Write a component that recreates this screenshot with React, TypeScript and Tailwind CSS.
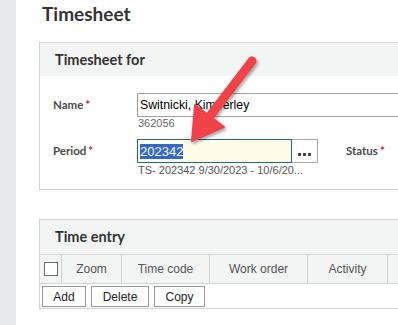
import React from "react";

const lato = { fontFamily: 'Lato, "Open Sans", sans-serif' };
const arial = { fontFamily: '"Liberation Sans", Arial, sans-serif' };

function Req() {
  return <span className="text-[#c0262d] ml-[2px]">*</span>;
}

export default function App() {
  return (
    <div className="relative w-[398px] h-[325px] overflow-hidden bg-white flex">
      <div className="w-[16px] h-full bg-[#e8e9eb] shrink-0" />
      <div className="flex-1 pl-[23px]">
        <div
          className="mt-[2px] ml-[3px] leading-[23px] text-[19px] font-bold text-[#333]"
          style={lato}
        >
          Timesheet
        </div>

        {/* Section 1 */}
        <div className="mt-[17px] w-[400px] border border-r-0 border-[#d3d3d3]">
          <div
            className="h-[33px] bg-[#f3f4f4] flex items-center pl-[15px] text-[14.5px] font-bold text-[#333]"
            style={lato}
          >
            Timesheet for
          </div>
          <div className="pt-[17px] pb-[12px]">
            {/* Name row */}
            <div className="flex">
              <div
                className="w-[97px] pl-[13px] h-[24px] flex items-center text-[11.5px] font-bold text-[#4a4a4a]"
                style={lato}
              >
                Name
                <Req />
              </div>
              <div className="flex-1">
                <div
                  className="h-[24px] border border-r-0 border-[#a0a0a0] flex items-center pl-[2px] text-[12.3px] text-black"
                  style={arial}
                >
                  Switnicki, Kimberley
                </div>
                <div
                  className="leading-[13px] text-[11px] text-[#666] pl-[1px]"
                  style={arial}
                >
                  362056
                </div>
              </div>
            </div>
            {/* Period row */}
            <div className="flex mt-[9px]">
              <div
                className="w-[97px] pl-[13px] h-[24px] flex items-center text-[11.5px] font-bold text-[#4a4a4a]"
                style={lato}
              >
                Period
                <Req />
              </div>
              <div className="flex flex-col">
                <div className="flex">
                  <div
                    className="w-[155px] h-[24px] border border-[#1f6a82] bg-[#fffde8] flex items-center pl-[2px] text-[13px]"
                    style={arial}
                  >
                    <span className="bg-[#3268c8] text-white leading-[15px]">
                      202342
                    </span>
                  </div>
                  <div className="w-[26px] h-[24px] border border-l-0 border-[#a9a9a9] bg-white flex items-end justify-center pb-[6px] gap-[2px]">
                    <span className="w-[3px] h-[3px] bg-[#444]" />
                    <span className="w-[3px] h-[3px] bg-[#444]" />
                    <span className="w-[3px] h-[3px] bg-[#444]" />
                  </div>
                </div>
                <div
                  className="leading-[13px] mt-[1px] text-[11px] text-[#555] pl-[1px]"
                  style={arial}
                >
                  TS- 202342 9/30/2023 - 10/6/20...
                </div>
              </div>
              <div
                className="ml-[28px] h-[24px] flex items-center text-[11.5px] font-bold text-[#4a4a4a]"
                style={lato}
              >
                Status
                <Req />
              </div>
            </div>
          </div>
        </div>

        {/* Section 2 */}
        <div className="mt-[29px] w-[400px] border border-r-0 border-[#d3d3d3]">
          <div
            className="h-[34px] bg-[#f3f4f4] flex items-center pl-[15px] text-[14.5px] font-bold text-[#333]"
            style={lato}
          >
            Time entry
          </div>
          <div
            className="flex h-[30px] bg-[#f3f4f4] border-y border-[#d3d3d3] text-[12px] text-[#555]"
            style={arial}
          >
            <div className="w-[22px] flex items-center justify-center border-r border-[#d3d3d3]">
              <div className="w-[14px] h-[14px] border border-[#6e6e6e] bg-white" />
            </div>
            <div className="w-[60px] flex items-center justify-center border-r border-[#d3d3d3]">
              Zoom
            </div>
            <div className="w-[88px] flex items-center justify-center border-r border-[#d3d3d3]">
              Time code
            </div>
            <div className="w-[98px] flex items-center justify-center border-r border-[#d3d3d3]">
              Work order
            </div>
            <div className="w-[80px] flex items-center justify-center border-r border-[#d3d3d3]">
              Activity
            </div>
            <div className="flex-1" />
          </div>
          <div
            className="flex gap-[5px] pl-[2px] pt-[2px] pb-[1px] text-[12px] text-[#222]"
            style={arial}
          >
            <div className="w-[44px] h-[21px] border border-[#9a9a9a] flex items-center justify-center">
              Add
            </div>
            <div className="w-[58px] h-[21px] border border-[#9a9a9a] flex items-center justify-center">
              Delete
            </div>
            <div className="w-[51px] h-[21px] border border-[#9a9a9a] flex items-center justify-center">
              Copy
            </div>
          </div>
        </div>
      </div>

      {/* Annotation arrow */}
      <svg
        className="absolute inset-0 pointer-events-none"
        width="398"
        height="325"
        viewBox="0 0 398 325"
      >
        <defs>
          <filter id="sh" x="-20%" y="-20%" width="140%" height="140%">
            <feDropShadow dx="1.5" dy="2" stdDeviation="1.8" floodColor="#000" floodOpacity="0.35" />
          </filter>
        </defs>
        <g filter="url(#sh)" fill="#f0424a" stroke="#f0424a">
          <line x1="252" y1="61" x2="210" y2="116" strokeWidth="9" strokeLinecap="round" />
          <polygon points="192,141 195,105 224,127" strokeWidth="2" strokeLinejoin="round" />
        </g>
      </svg>
    </div>
  );
}
